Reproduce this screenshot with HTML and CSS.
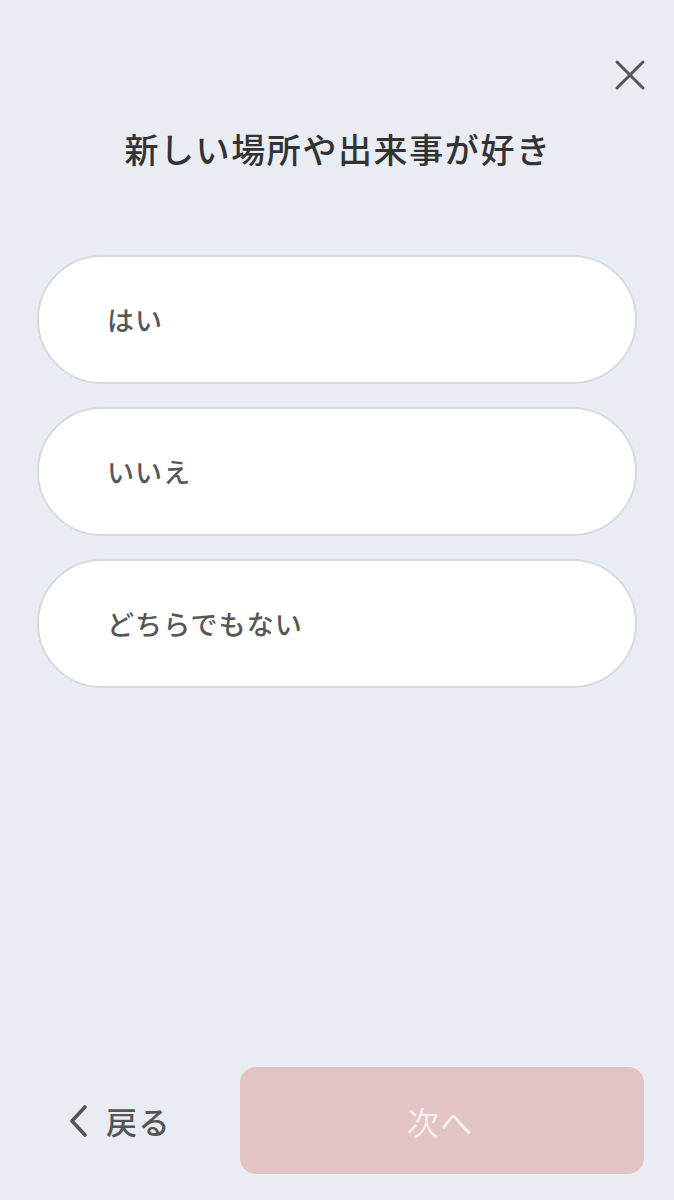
FILE: index.html
```html
<!DOCTYPE html>
<html lang="ja">
  <head>
    <meta charset="utf-8" />
    <title>質問</title>
    <meta name="viewport" content="width=device-width, initial-scale=1" />
    <link rel="stylesheet" href="styles.css">
  </head>
  <body>
    <div class="screen">
      <div class="top-bar">
        <button class="close-btn" aria-label="閉じる">
          <svg width="32" height="32" viewBox="0 0 32 32">
            <path d="M3 3 L29 29 M29 3 L3 29" stroke="#555" stroke-width="3" stroke-linecap="round" fill="none" />
          </svg>
        </button>
      </div>
      <h1 class="question">新しい場所や出来事が好き</h1>
      <div class="options">
        <button class="option">はい</button>
        <button class="option">いいえ</button>
        <button class="option">どちらでもない</button>
      </div>
      <div class="footer">
        <button class="back-btn">
          <svg width="22" height="34" viewBox="0 0 22 34">
            <path d="M18 3 L5 17 L18 31" stroke="#555" stroke-width="3.6" stroke-linecap="round" stroke-linejoin="round" fill="none" />
          </svg>
          <span>戻る</span>
        </button>
        <button class="next-btn" disabled>次へ</button>
      </div>
    </div>
  </body>
</html>
```

FILE: styles.css
```css
html,
body {
  margin: 0;
  padding: 0;
}
body {
  background: #e9ecf3;
  font-family: "Noto Sans CJK JP", "Noto Sans", sans-serif;
  color: #333;
}
button {
  font-family: inherit;
  cursor: pointer;
}

.screen {
  min-height: 1200px;
  display: flex;
  flex-direction: column;
  box-sizing: border-box;
}

.top-bar {
  display: flex;
  justify-content: flex-end;
  padding: 59px 28px 0 0;
}
.close-btn {
  background: none;
  border: 0;
  padding: 0;
  width: 32px;
  height: 32px;
  display: flex;
}

.question {
  margin: 36px 0 0;
  padding-left: 2px;
  text-align: center;
  font-size: 34px;
  line-height: 44px;
  font-weight: 500;
  color: #333;
  letter-spacing: 1.6px;
}

.options {
  display: flex;
  flex-direction: column;
  gap: 23px;
  padding: 0 37px;
  margin-top: 84px;
}
.option {
  height: 129px;
  border-radius: 65px;
  background: #fff;
  border: 2px solid #d3dbe0;
  text-align: left;
  padding: 0 0 0 68px;
  font-size: 27px;
  font-weight: 500;
  color: #575757;
  letter-spacing: 1.1px;
}

.footer {
  margin-top: auto;
  display: flex;
  align-items: center;
  padding: 0 30px 26px 0;
}
.back-btn {
  flex: 1;
  background: none;
  border: 0;
  display: flex;
  align-items: center;
  gap: 17px;
  padding: 0 0 0 67px;
  font-size: 31px;
  font-weight: 500;
  color: #555;
  letter-spacing: 1.5px;
}
.next-btn {
  width: 404px;
  height: 107px;
  border: 0;
  border-radius: 16px;
  background: #e2c4c5;
  color: #f8efef;
  font-size: 32px;
  font-weight: 400;
  letter-spacing: 1px;
  padding-left: 2px;
}
```
